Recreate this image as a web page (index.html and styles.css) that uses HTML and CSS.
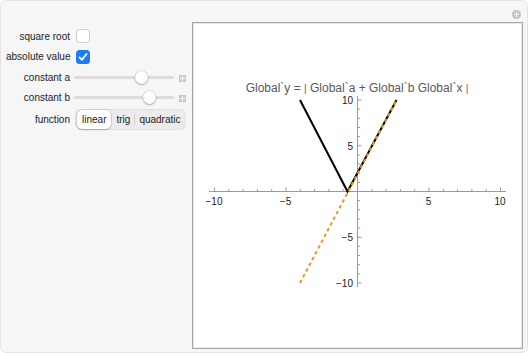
FILE: index.html
```html
<!DOCTYPE html>
<html lang="en">
    <head>
        <meta charset="UTF-8">
        <meta name="viewport" content="width=device-width, initial-scale=1.0">
        <title>Absolute value explorer</title>
        <link rel="stylesheet" href="styles.css">
    </head>
    <body>
        <div class="panel">
            <div class="controls">
                <span class="label">square root</span>
                <div class="control"><span class="box"></span></div>

                <span class="label">absolute value</span>
                <div class="control"><span class="box checked">
                    <svg width="14" height="14" viewBox="0 0 14 14"><path d="M3.5 7.3 L6 9.8 L10.6 3.9" fill="none" stroke="#fff" stroke-width="1.8" stroke-linecap="round" stroke-linejoin="round"/></svg>
                </span></div>

                <span class="label">constant a</span>
                <div class="control">
                    <div class="slider"><span class="thumb" style="left: 67%"></span></div>
                    <span class="more"></span>
                </div>

                <span class="label">constant b</span>
                <div class="control">
                    <div class="slider"><span class="thumb" style="left: 75%"></span></div>
                    <span class="more"></span>
                </div>

                <span class="label">function</span>
                <div class="control">
                    <div class="segmented">
                        <span class="seg selected">linear</span>
                        <span class="seg">trig</span>
                        <span class="sep"></span>
                        <span class="seg">quadratic</span>
                    </div>
                </div>
            </div>

            <div class="plot">
                <svg width="329" height="325" viewBox="193 23 329 325">
                    <text class="title" x="357" y="92" text-anchor="middle">Global`y = <tspan class="bar">|</tspan> Global`a + Global`b Global`x <tspan class="bar">|</tspan></text>

                    <g class="axis">
                        <line x1="209" y1="191.5" x2="506" y2="191.5"/>
                        <line x1="357.5" y1="96" x2="357.5" y2="287"/>
                    </g>
                    <g class="ticks" id="ticks"></g>

                    <g class="tick-labels">
                        <text x="214" y="205" text-anchor="middle">−10</text>
                        <text x="285.5" y="205" text-anchor="middle">−5</text>
                        <text x="428.5" y="205" text-anchor="middle">5</text>
                        <text x="500" y="205" text-anchor="middle">10</text>
                        <text x="353" y="104" text-anchor="end">10</text>
                        <text x="353" y="150" text-anchor="end">5</text>
                        <text x="353" y="241" text-anchor="end">−5</text>
                        <text x="353" y="287" text-anchor="end">−10</text>
                    </g>

                    <polyline class="curve" points="300,100 347.5,191.5 396.5,100"/>
                    <line class="inner" x1="300" y1="283" x2="396.5" y2="100"/>
                </svg>
            </div>

            <span class="corner"></span>
        </div>

        <script>
            // minor and major ticks on both axes
            const ticks = document.getElementById('ticks');
            let out = '';
            for (let k = -10; k <= 10; k++) {
                if (k == 0) continue;
                let big = k % 5 == 0;
                let x = 357.5 + k * 14.3;
                out += `<line x1="${x}" y1="191.5" x2="${x}" y2="${191.5 - (big ? 4 : 2.5)}"/>`;
                let y = 191.5 - k * 9.15;
                out += `<line x1="357.5" y1="${y}" x2="${357.5 + (big ? 4 : 2.5)}" y2="${y}"/>`;
            }
            ticks.innerHTML = out;
        </script>
    </body>
</html>
```

FILE: styles.css
```css
html, body {
    margin: 0;
    padding: 0;
    background: #fff;
}

.panel {
    --panel-background: #f6f6f6;
    --panel-border: #e4e4e4;
    --label-color: #222;
    --accent-blue: #1a7cf6;
    --curve-orange: #e09c24;
    position: relative;
    box-sizing: border-box;
    width: 528px;
    height: 353px;
    display: flex;
    align-items: flex-start;
    padding: 21px 0 0 5px;
    background: var(--panel-background);
    border: 1px solid var(--panel-border);
    border-radius: 6px;
    font-family: "Liberation Sans", Arial, sans-serif;
    font-size: 10px;
    color: var(--label-color);
}

.controls {
    width: 186px;
    margin-top: 4px;
    display: grid;
    grid-template-columns: 64px 1fr;
    grid-template-rows: 20px 21px 20px 20px 25px;
    column-gap: 5px;
    align-items: center;
}

.controls .label {
    text-align: right;
    white-space: nowrap;
}

.controls .control {
    display: flex;
    align-items: center;
}

.box {
    box-sizing: border-box;
    width: 14px;
    height: 14px;
    margin-left: 1px;
    border: 1px solid #c9c9c9;
    border-radius: 3.5px;
    background: #fff;
}

.box.checked {
    border: none;
    background: var(--accent-blue);
}

.box svg {
    display: block;
}

.slider {
    position: relative;
    width: 100px;
    height: 3px;
    margin-left: -1px;
    border-radius: 2px;
    background: #dcdcdc;
}

.slider .thumb {
    position: absolute;
    top: -5px;
    width: 13px;
    height: 13px;
    margin-left: -6px;
    border-radius: 50%;
    background: #fff;
    box-shadow: 0 0 0 0.5px rgba(0, 0, 0, 0.15), 0 1px 2px rgba(0, 0, 0, 0.25);
}

.more {
    position: relative;
    width: 7px;
    height: 7px;
    margin-left: 5px;
    margin-top: 2px;
    background: #c8c8c8;
}

.more::before,
.more::after {
    content: "";
    position: absolute;
    background: #fff;
}

.more::before {
    left: 1px;
    top: 3px;
    width: 5px;
    height: 1px;
}

.more::after {
    left: 3px;
    top: 1px;
    width: 1px;
    height: 5px;
}

.segmented {
    display: flex;
    align-items: center;
    box-sizing: border-box;
    width: 111px;
    height: 21px;
    padding: 1px;
    border-radius: 6px;
    background: #ececec;
    border: 0.5px solid #e0e0e0;
}

.segmented .seg {
    padding: 0 3px;
    line-height: 19px;
    border-radius: 5px;
}

.segmented .seg.selected {
    padding: 0 5px;
    background: #fff;
    box-shadow: 0 0 0 0.5px rgba(0, 0, 0, 0.15), 0 1px 2px rgba(0, 0, 0, 0.2);
    margin-right: 2px;
}

.segmented .sep {
    width: 1px;
    height: 11px;
    margin: 0 1px;
    background: #d0d0d0;
}

.plot {
    box-sizing: border-box;
    width: 331px;
    height: 327px;
    background: #fff;
    border: 1px solid #a8a8a8;
    box-shadow: inset 0 0 0 1px #e6e6e6;
}

.plot svg {
    display: block;
}

.plot .title {
    font-size: 12px;
    fill: #5a5a5a;
}

.plot .title .bar {
    font-size: 10px;
}

.plot .axis line,
.plot .ticks line {
    stroke: #9a9a9a;
    stroke-width: 1;
}

.plot .tick-labels text {
    font-size: 10px;
    fill: #222;
}

.plot .curve {
    fill: none;
    stroke: #000;
    stroke-width: 2;
    stroke-linejoin: miter;
}

.plot .inner {
    stroke: var(--curve-orange);
    stroke-width: 2;
    stroke-dasharray: 3.5 3;
}

.corner {
    position: absolute;
    right: 6px;
    top: 9px;
    width: 9px;
    height: 9px;
    border-radius: 50%;
    background: #c4c4c4;
}

.corner::before,
.corner::after {
    content: "";
    position: absolute;
    background: #fff;
}

.corner::before {
    left: 2px;
    top: 4px;
    width: 5px;
    height: 1px;
}

.corner::after {
    left: 4px;
    top: 2px;
    width: 1px;
    height: 5px;
}
```
